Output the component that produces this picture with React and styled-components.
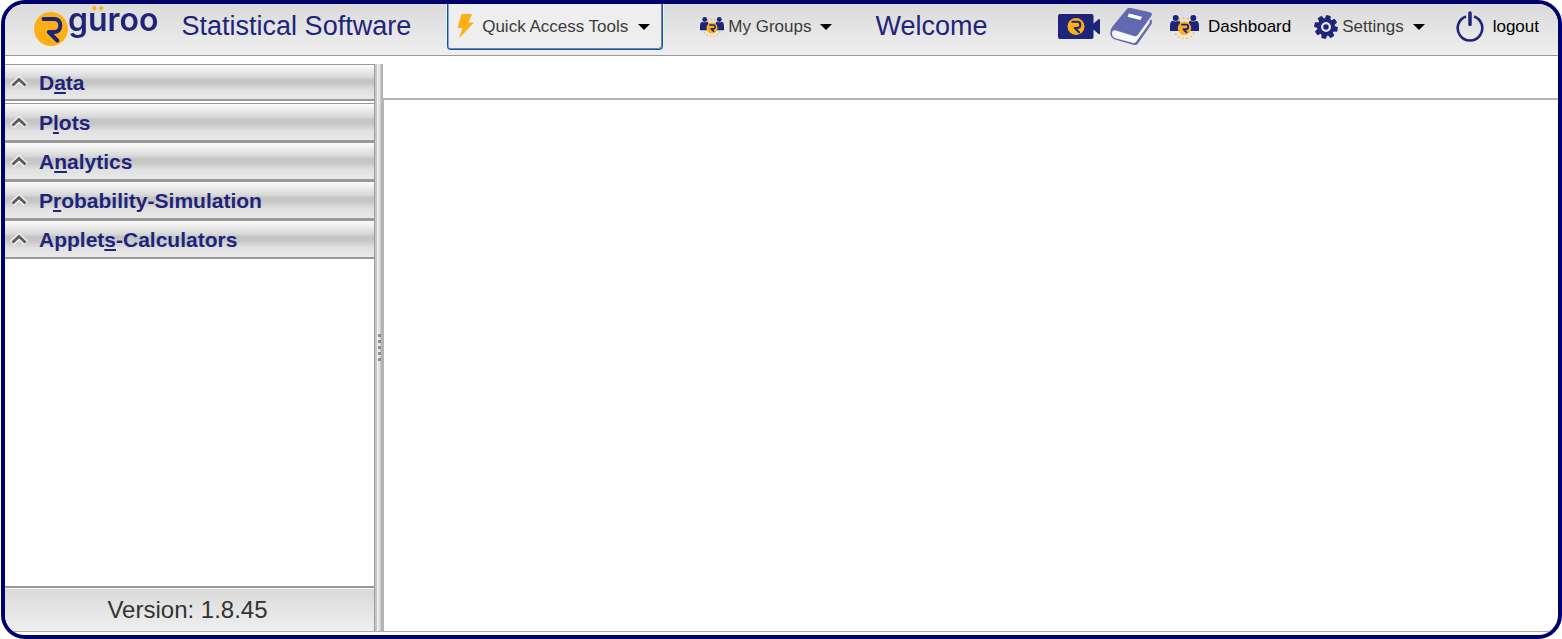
import React from "react";
import styled, { createGlobalStyle } from "styled-components";

const navy = "#1e247a";
const gold = "#fcb017";

const GlobalStyle = createGlobalStyle`
  *, *::before, *::after { box-sizing: border-box; }
  body {
    margin: 0;
    background: #fff;
    color: #333;
    font-family: "Liberation Sans", Arial, sans-serif;
  }
  button { font: inherit; color: inherit; cursor: pointer; }
  h1, h2, p { margin: 0; font-weight: 400; }
`;

const Frame = styled.div`
  display: flex;
  flex-direction: column;
  min-height: 100vh;
  margin-left: 1px;
  padding-bottom: 3px;
  overflow: hidden;
  border: 4px solid #00006c;
  border-radius: 24px;
`;

const Header = styled.header`
  display: flex;
  align-items: center;
  justify-content: space-between;
  height: 52px;
  padding: 0 19px 0 29px;
  border-bottom: 1px solid #999;
  background: linear-gradient(#dadada, #efefef);
`;

const HeaderGroup = styled.div`
  display: flex;
  align-items: center;
  align-self: stretch;
  padding-bottom: 5px;
`;

const Brand = styled.a`
  display: flex;
  align-self: stretch;
  align-items: flex-start;
  margin-right: 23px;
  text-decoration: none;

  svg { margin-top: 8px; }
`;

const BrandName = styled.span`
  padding-bottom: 12px;
  font: 600 32px/32px Inter, sans-serif;
  color: transparent;
  background: linear-gradient(${gold} 0 8px, ${navy} 8px);
  background-clip: text;
`;

const Title = styled.h1`
  padding-bottom: 2px;
  color: ${navy};
  font-size: 27px;
  line-height: 32px;
  white-space: nowrap;
`;

const MenuButton = styled.button`
  display: flex;
  align-items: center;
  gap: ${(p) => p.$gap || 4}px;
  padding: 0;
  border: 0;
  background: none;
  color: #3b3b3b;
  font-size: 17px;
  line-height: 24px;
  white-space: nowrap;
`;

const QuickButton = styled(MenuButton)`
  align-self: stretch;
  margin: 0 37px 0 36px;
  padding: 0 12px 0 9px;
  border: 1px solid #0b4fc4;
  border-top: 0;
  border-radius: 0 0 4px 4px;
  background: #eee;
  box-shadow: inset -1px -1px #85858f, inset 1px 0 #85a5dd, 0 0 0 1px #f4f4f4;
`;

const Welcome = styled.p`
  margin-left: 43px;
  padding-bottom: 2px;
  color: ${navy};
  font-size: 27px;
  line-height: 32px;
`;

const HeaderLink = styled.a`
  display: flex;
  align-items: center;
  gap: 9px;
  margin-left: ${(p) => p.$space || 0}px;
  color: #000;
  font-size: 17px;
  line-height: 24px;
  text-decoration: none;
`;

const Settings = styled(MenuButton)`
  margin: 0 31px 0 23px;
`;

const Caret = styled.span`
  width: 0;
  margin-left: ${(p) => p.$space || 5}px;
  border: 6px solid transparent;
  border-top-color: #000;
  border-bottom: 0;
`;

const Body = styled.div`
  display: flex;
  flex: 1;
  padding-top: 8px;
  border-bottom: 1px solid #aaa;
`;

const Sidebar = styled.aside`
  display: flex;
  flex-direction: column;
  width: 370px;
  flex: none;
  border-right: 1px solid #999;
`;

const Section = styled.h2`
  border: solid #999;
  border-width: 1px 0 2px;
  margin-bottom: ${(p) => p.$space || 0}px;
`;

const SectionButton = styled.button`
  display: flex;
  align-items: center;
  gap: 11px;
  width: 100%;
  height: ${(p) => p.$height || 36}px;
  padding: 2px 5px 0;
  border: 0;
  background: linear-gradient(#fcfcfc, #d8d8d8 36%, #c4c4c4 44%, #c6c6c6 54%, #e0e0e0 74%, #e9e9e9);
  color: ${navy};
  font-size: 21px;
  font-weight: 700;
  line-height: 24px;
  text-align: left;
`;

const AccessKey = styled.span`
  text-decoration: underline 2px;
  text-underline-offset: 2px;
  text-decoration-skip-ink: none;
`;

const Version = styled.footer`
  margin-top: auto;
  padding: 1px 4px 0 0;
  border-top: 2px solid #999;
  background: linear-gradient(#fff 1px, #dadada 1px, #efefef);
  color: #333;
  font-size: 24px;
  line-height: 42px;
  text-align: center;
`;

const Splitter = styled.div`
  display: flex;
  flex-direction: column;
  justify-content: center;
  align-items: center;
  gap: 3px;
  width: 8px;
  flex: none;
  background: linear-gradient(to right, #c8c8c8 2px, #f0f0f0 2px 3px, #e4e4e4 3px 5px, #c8c8c8 5px 6px, #b4b4b4 6px);
`;

const Grip = styled.span`
  width: 3px;
  height: 3px;
  background: #8d8d8d;
  box-shadow: -1px -1px #eee;
`;

const Workspace = styled.main`
  display: flex;
  flex-direction: column;
  flex: 1;
`;

const TabStrip = styled.div`
  height: 36px;
  border-bottom: 2px solid #b1b5bb;
`;

const Canvas = styled.div`
  flex: 1;
  border-left: 1px solid #b4b4b4;
`;

const Mark = ({ size }) => (
  <svg width={size} height={size} viewBox="0 0 34 34" aria-hidden="true">
    <circle cx="17" cy="17" r="17" fill={gold} />
    <path d="M9.500 7H20C24 7 26.300 9.500 26.300 13.500S24 20 20 20H14.800L23.300 28.500" fill="none" stroke={navy} strokeWidth="4" strokeLinecap="round" strokeLinejoin="round" />
  </svg>
);

const Bolt = () => (
  <svg width="18" height="26" viewBox="0 0 18 26" aria-hidden="true">
    <path d="M4.500 0H15L11.500 8.500H17L2 24.500L5.500 14H.500Z" fill={gold} />
  </svg>
);

const People = ({ width }) => (
  <svg width={width} height={width * 24 / 28} viewBox="0 0 28 24" aria-hidden="true">
    <circle cx="14" cy="13" r="10" fill="none" stroke={gold} strokeWidth="1.300" strokeDasharray="1.500 2.600" />
    <g fill={navy}>
      <circle cx="5.500" cy="3" r="2.900" />
      <circle cx="22.500" cy="3" r="2.900" />
      <path d="M2 5.500Q5.500 7 9 5.500L11.500 11L9 15.500H0V10Q0 6.500 2 5.500Z" />
      <path d="M19 5.500Q22.500 7 26 5.500Q28 6.500 28 10V15.500H19L16.500 11Z" />
    </g>
    <circle cx="14" cy="12.800" r="6.500" fill={gold} />
    <path d="M10.800 9.300H15.500C18.300 9.300 18.300 13.800 15.500 13.800H13L16.500 17.200" fill="none" stroke={navy} strokeWidth="1.800" strokeLinejoin="round" />
  </svg>
);

const Video = () => (
  <svg width="43" height="26" viewBox="0 0 43 26" aria-hidden="true">
    <path d="M2 0H33.500Q35.500 0 35.500 2V9.500L40.500 5.200Q42 4.500 42 6.200V19Q42 20.700 40.500 20L35.500 15.500V23Q35.500 25 33.500 25H2Q0 25 0 23V2Q0 0 2 0Z" fill={navy} />
    <circle cx="18" cy="12.500" r="8.500" fill={gold} />
    <path d="M14.300 7.800H19.300C23.300 7.800 23.300 14 19.300 14H16.800L21 18.200" fill="none" stroke={navy} strokeWidth="2" strokeLinecap="round" strokeLinejoin="round" />
  </svg>
);

const Book = () => (
  <svg width="43" height="40" viewBox="0 0 43 40" aria-hidden="true">
    <path d="M21 1L40 5.200Q43 6.200 41.300 9L28 27.500Q26.500 29.800 24 29L5.500 23.300Q2 22.500 2 26Q2 30.300 5 31.300L23 36Q25 36.500 26 35L39.500 16L40 13L41.500 12.500Q42.500 15 41.300 17.500L28 36.500Q26.500 38.500 24 38L5 32.500Q-.5 30.500 .5 24.500Q.8 22 2.500 19.500L16 3Q18 .300 21 1Z" fill="#6369b0" />
    <path d="M5.500 24L24 29.700Q26.500 30.300 28 28.200L39 13V16L26 34.500Q25 36 23 35.300L5.500 30.500Q2.500 29.500 2.500 27Q2.700 23.500 5.500 24Z" fill="#f7f7f9" />
    <path d="M19 6.500L32 9.700L30.500 13L17.500 9.800Z" fill="#fff" />
  </svg>
);

const Gear = () => (
  <svg width="24" height="24" viewBox="-12 -12 24 24" aria-hidden="true">
    <g fill={navy}>
      {[0, 45, 90, 135, 180, 225, 270, 315].map((a) => (
        <path key={a} d="M-3-7L-2.300-11.800H2.300L3-7Z" transform={`rotate(${a + 12})`} />
      ))}
    </g>
    <circle r="7" fill="none" stroke={navy} strokeWidth="4" />
    <circle r="2.700" fill={navy} />
  </svg>
);

const Power = () => (
  <svg width="28" height="32" viewBox="0 0 28 32" aria-hidden="true">
    <g fill="none" stroke={navy} strokeWidth="2.600">
      <path d="M10 5.500A12.300 12.300 0 1 0 18 5.500" />
      <path d="M14 2V13.500" strokeWidth="3.500" strokeLinecap="round" />
    </g>
  </svg>
);

const Chevron = () => (
  <svg width="18" height="14" viewBox="0 0 18 14" aria-hidden="true">
    <g fill="none" strokeLinejoin="miter">
      <path d="M2 10L9 3.500L16 10" stroke="#eee" strokeWidth="6" />
      <path d="M2.500 9.500L9 3.500L15.500 9.500" stroke="#5c5c5c" strokeWidth="2.800" />
    </g>
  </svg>
);

const sections = [
  { before: "D", key: "a", after: "ta", height: 34, space: 2 },
  { before: "P", key: "l", after: "ots" },
  { before: "A", key: "n", after: "alytics" },
  { before: "P", key: "r", after: "obability-Simulation" },
  { before: "Applet", key: "s", after: "-Calculators" },
];

export default function App() {
  return (
    <>
      <GlobalStyle />
      <Frame>
        <Header>
          <HeaderGroup>
            <Brand href="#home">
              <Mark size={34} />
              <BrandName>güroo</BrandName>
            </Brand>
            <Title>Statistical Software</Title>
            <QuickButton type="button" $gap={7}>
              <Bolt />
              Quick Access Tools
              <Caret $space={3} />
            </QuickButton>
            <MenuButton type="button">
              <People width={24} />
              My Groups
              <Caret />
            </MenuButton>
            <Welcome>Welcome</Welcome>
          </HeaderGroup>
          <HeaderGroup>
            <HeaderLink href="#videos" aria-label="Videos"><Video /></HeaderLink>
            <HeaderLink href="#guide" aria-label="User guide" $space={9}><Book /></HeaderLink>
            <HeaderLink href="#dashboard" $space={17}>
              <People width={29} />
              Dashboard
            </HeaderLink>
            <Settings type="button">
              <Gear />
              Settings
              <Caret />
            </Settings>
            <HeaderLink href="#logout">
              <Power />
              logout
            </HeaderLink>
          </HeaderGroup>
        </Header>
        <Body>
          <Sidebar>
            {sections.map((s) => (
              <Section key={s.after} $space={s.space}>
                <SectionButton type="button" aria-expanded="false" $height={s.height}>
                  <Chevron />
                  <span>{s.before}<AccessKey>{s.key}</AccessKey>{s.after}</span>
                </SectionButton>
              </Section>
            ))}
            <Version>Version: 1.8.45</Version>
          </Sidebar>
          <Splitter>
            <Grip /><Grip /><Grip /><Grip /><Grip />
          </Splitter>
          <Workspace>
            <TabStrip />
            <Canvas />
          </Workspace>
        </Body>
      </Frame>
    </>
  );
}
